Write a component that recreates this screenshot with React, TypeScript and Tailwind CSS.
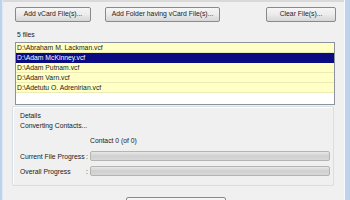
import React from 'react';

const files = [
  'D:\\Abraham M. Lackman.vcf',
  'D:\\Adam McKinney.vcf',
  'D:\\Adam Putnam.vcf',
  'D:\\Adam Varn.vcf',
  'D:\\Adetutu O. Adrenirian.vcf',
];

// Vista-ish push button
const Btn: React.FC<{ className?: string; children?: React.ReactNode }> = ({ className = '', children }) => (
  <div
    className={`h-[15px] shrink-0 flex items-center justify-center rounded-[2px] border border-[#8a8a8a] bg-gradient-to-b from-[#f6f6f6] via-[#ebebeb] to-[#d6d6d6] text-[#222] leading-none ${className}`}
  >
    {children}
  </div>
);

const ProgressBar: React.FC = () => (
  <div className="flex-1 h-[10px] rounded-[2px] border border-[#b4b4b4] bg-gradient-to-b from-[#e8e8e8] via-[#d0d0d0] to-[#d8d8d8]" />
);

export default function App() {
  return (
    <div
      className="w-[350px] h-[200px] overflow-hidden flex bg-[#f0f0f0] text-[6.8px] text-[#1a1a1a]"
      style={{ fontFamily: '"Liberation Sans", Arial, sans-serif' }}
    >
      <div className="w-[3px] h-full bg-[#bdd3ec] border-r border-[#dfe9f5]" />

      <div className="flex-1 flex flex-col border-t-2 border-[#d9d9d9] pl-[12px] pr-[8px] pt-[5px]">
        {/* top buttons */}
        <div className="flex items-center shrink-0">
          <Btn className="w-[76px]">Add vCard File(s)...</Btn>
          <Btn className="w-[115px] ml-[14px]">Add Folder having vCard File(s)...</Btn>
          <Btn className="w-[70px] ml-auto">Clear File(s)...</Btn>
        </div>

        <div className="mt-[8px] leading-[9px] pl-[2px] shrink-0">5 files</div>

        {/* file list */}
        <div className="mt-[3px] w-[320px] h-[63px] shrink-0 border border-[#8e939b] bg-white flex flex-col">
          {files.map((f, i) => (
            <div
              key={f}
              className={`h-[10px] shrink-0 leading-[10px] pl-[1px] border-b ${
                i === 1
                  ? 'bg-[#0b0b82] text-white border-[#0b0b82]'
                  : 'bg-[#ffffc6] border-[#ecebb4]'
              }`}
            >
              {f}
            </div>
          ))}
        </div>

        {/* details group */}
        <div className="mt-[1px] -ml-[3px] w-[322px] h-[80px] shrink-0 border border-[#d5dfe5] rounded-[2px] shadow-[inset_1px_1px_0_#ffffff] pl-[7px] pr-[3px] pt-[4px] flex flex-col">
          <div className="leading-[9px]">Details</div>
          <div className="mt-[1px] leading-[9px]">Converting Contacts...</div>
          <div className="mt-[6px] leading-[9px] pl-[70px]">Contact 0 (of 0)</div>
          <div className="mt-[6px] flex items-center h-[10px]">
            <div className="w-[70px] flex leading-[9px]">
              <span className="flex-1">Current File Progress</span>
              <span className="w-[4px]">:</span>
            </div>
            <ProgressBar />
          </div>
          <div className="mt-[5px] flex items-center h-[10px]">
            <div className="w-[70px] flex leading-[9px]">
              <span className="flex-1">Overall Progress</span>
              <span className="w-[4px]">:</span>
            </div>
            <ProgressBar />
          </div>
        </div>

        {/* bottom button, only its top edge is inside the window */}
        <div className="mt-[11px] ml-[111px] w-[100px] shrink-0">
          <Btn className="w-[100px]" />
        </div>
      </div>

      <div className="w-[6px] h-full bg-[#bdd3ec] border-l border-[#f7f9fc]" />
    </div>
  );
}
